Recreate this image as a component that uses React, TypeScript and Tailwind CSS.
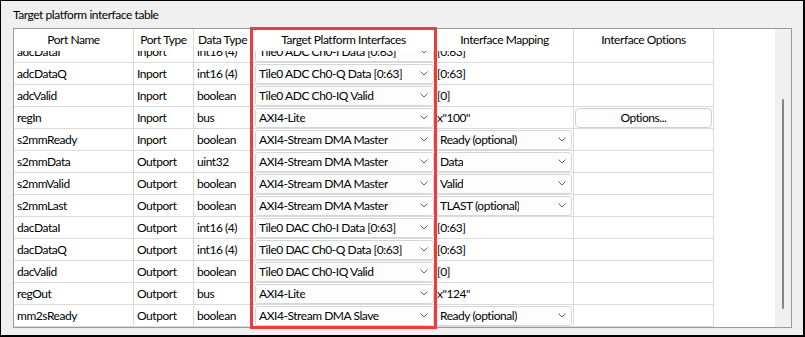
import clsx from "clsx";

type Row = {
  name: string;
  portType: string;
  dataType: string;
  target: string;
  mapping: string;
  mappingCombo?: boolean;
  options?: boolean;
};

const rows: Row[] = [
  { name: "adcDataI", portType: "Inport", dataType: "int16 (4)", target: "Tile0 ADC Ch0-I Data [0:63]", mapping: "[0:63]" },
  { name: "adcDataQ", portType: "Inport", dataType: "int16 (4)", target: "Tile0 ADC Ch0-Q Data [0:63]", mapping: "[0:63]" },
  { name: "adcValid", portType: "Inport", dataType: "boolean", target: "Tile0 ADC Ch0-IQ Valid", mapping: "[0]" },
  { name: "regIn", portType: "Inport", dataType: "bus", target: "AXI4-Lite", mapping: 'x"100"', options: true },
  { name: "s2mmReady", portType: "Inport", dataType: "boolean", target: "AXI4-Stream DMA Master", mapping: "Ready (optional)", mappingCombo: true },
  { name: "s2mmData", portType: "Outport", dataType: "uint32", target: "AXI4-Stream DMA Master", mapping: "Data", mappingCombo: true },
  { name: "s2mmValid", portType: "Outport", dataType: "boolean", target: "AXI4-Stream DMA Master", mapping: "Valid", mappingCombo: true },
  { name: "s2mmLast", portType: "Outport", dataType: "boolean", target: "AXI4-Stream DMA Master", mapping: "TLAST (optional)", mappingCombo: true },
  { name: "dacDataI", portType: "Outport", dataType: "int16 (4)", target: "Tile0 DAC Ch0-I Data [0:63]", mapping: "[0:63]" },
  { name: "dacDataQ", portType: "Outport", dataType: "int16 (4)", target: "Tile0 DAC Ch0-Q Data [0:63]", mapping: "[0:63]" },
  { name: "dacValid", portType: "Outport", dataType: "boolean", target: "Tile0 DAC Ch0-IQ Valid", mapping: "[0]" },
  { name: "regOut", portType: "Outport", dataType: "bus", target: "AXI4-Lite", mapping: 'x"124"' },
  { name: "mm2sReady", portType: "Outport", dataType: "boolean", target: "AXI4-Stream DMA Slave", mapping: "Ready (optional)", mappingCombo: true },
];

function Chevron() {
  return (
    <svg width="8" height="5" viewBox="0 0 8 5" className="shrink-0">
      <path d="M0.5 0.5 L4 4 L7.5 0.5" fill="none" stroke="#606060" strokeWidth="1" />
    </svg>
  );
}

function Combo({ label, className }: { label: string; className?: string }) {
  return (
    <div
      className={clsx(
        "flex h-[20px] flex-1 items-center justify-between rounded-[3px] border border-[#d6d6d6] bg-[#fdfdfd] pl-[3px] pr-[5px]",
        className
      )}
    >
      <span className="truncate">{label}</span>
      <Chevron />
    </div>
  );
}

const cell = "flex h-full items-center border-r border-[#dadada]";

export default function App() {
  return (
    <div className="h-[337px] w-[805px] border-t border-l border-r-2 border-b-2 border-black bg-[#f0f0f0] pl-[12px] pt-[6px] font-['Lato',sans-serif] text-[12px] tracking-[-0.45px] text-black">
      <div className="h-[16px] leading-[16px]">Target platform interface table</div>

      <div className="relative mt-[5px] flex h-[300px] w-[779px] border border-[#9a9a9a] bg-white">
        {/* highlight */}
        <div className="pointer-events-none absolute left-[236px] top-[-2px] z-10 h-[302px] w-[187px] border-[3px] border-[#f03b3e]" />

        <div className="flex w-[761px] flex-col">
          {/* header */}
          <div className="flex h-[22px] shrink-0">
            <div className={clsx(cell, "w-[120px] justify-center")}>Port Name</div>
            <div className={clsx(cell, "w-[60px] justify-center")}>Port Type</div>
            <div className={clsx(cell, "w-[58px] justify-center")}>Data Type</div>
            <div className={clsx(cell, "w-[184px] justify-center")}>Target Platform Interfaces</div>
            <div className={clsx(cell, "w-[138px] justify-center")}>Interface Mapping</div>
            <div className={clsx(cell, "w-[140px] justify-center")}>Interface Options</div>
          </div>

          {/* body, scrolled so the first row is partly hidden */}
          <div className="h-[276px] overflow-hidden">
            <div className="-mt-[10px] w-[700px]">
              {rows.map((r) => (
                <div key={r.name} className="flex h-[22px] border-b border-[#dadada]">
                  <div className={clsx(cell, "w-[120px] pl-[3px]")}>{r.name}</div>
                  <div className={clsx(cell, "w-[60px] pl-[3px]")}>{r.portType}</div>
                  <div className={clsx(cell, "w-[58px] pl-[3px]")}>{r.dataType}</div>
                  <div className={clsx(cell, "w-[184px] pl-[3px] pr-[1px]")}>
                    <Combo label={r.target} />
                  </div>
                  <div className={clsx(cell, "w-[138px] pr-[1px]")}>
                    {r.mappingCombo ? (
                      <Combo label={r.mapping} className="pr-[4px]" />
                    ) : (
                      <span className="pl-[1px]">{r.mapping}</span>
                    )}
                  </div>
                  <div className={clsx(cell, "w-[140px] px-[1px]")}>
                    {r.options && (
                      <div className="flex h-[20px] flex-1 items-center justify-center rounded-[4px] border border-[#d0d0d0] bg-[#fdfdfd]">
                        Options...
                      </div>
                    )}
                  </div>
                </div>
              ))}
            </div>
          </div>
        </div>

        {/* scrollbar */}
        <div className="w-[16px] bg-[#f0f0f0] pl-[7px] pt-[70px]">
          <div className="h-[210px] w-[2px] rounded-full bg-[#858585]" />
        </div>
      </div>
    </div>
  );
}
